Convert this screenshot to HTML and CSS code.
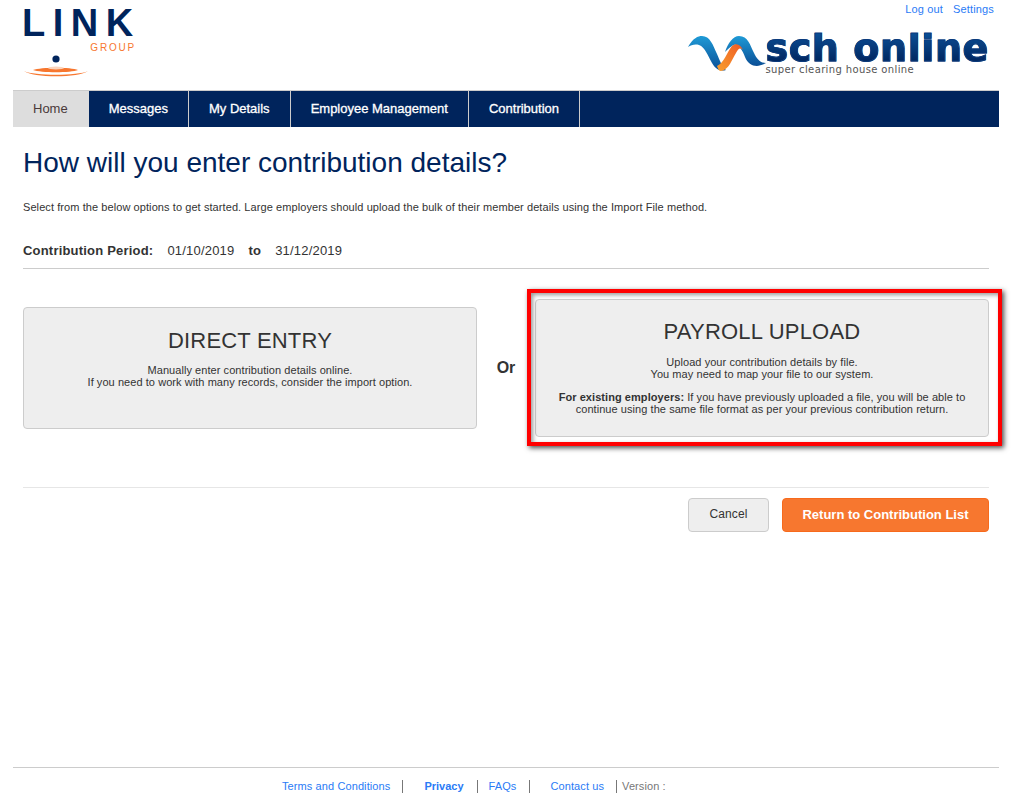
FILE: index.html
```html
<!DOCTYPE html>
<html>
<head>
    <title>How will you enter contribution details?</title>
    <meta charset="utf-8" />
    <link rel="stylesheet" href="styles.css">
</head>
<body>
    <div class="page">
        <header class="header">
            <div class="link-logo">
                <div class="link-word">LINK</div>
                <div class="link-group">GROUP</div>
                <svg class="link-mark" width="70" height="26" viewBox="0 0 70 26">
                    <circle cx="33" cy="5" r="3.6" fill="#00245c"/>
                    <path d="M10 16 C18 13 48 13 55 16 C48 19 18 19 10 16 Z" fill="#f7772f"/>
                    <ellipse cx="33" cy="14" rx="8" ry="1.5" fill="#fbd5bd"/>
                    <path d="M1 17 C10 24 56 24 65 17 C55 22 11 22 1 17 Z" fill="#f7772f"/>
                </svg>
            </div>
            <div class="header-right">
                <div class="user-links">
                    <a href="#">Log out</a>
                    <a href="#">Settings</a>
                </div>
                <div class="sch-logo">
                    <svg class="sch-wave" width="78" height="38" viewBox="0 0 78 38">
                        <defs>
                            <linearGradient id="waveBlue" x1="0" y1="0" x2="0" y2="1">
                                <stop offset="0" stop-color="#1e9ad6"/>
                                <stop offset="1" stop-color="#0b4f96"/>
                            </linearGradient>
                            <linearGradient id="waveOrange" x1="0" y1="1" x2="1" y2="0">
                                <stop offset="0" stop-color="#f9a02f"/>
                                <stop offset="1" stop-color="#ee5a24"/>
                            </linearGradient>
                        </defs>
                        <path d="M0 12 C5 3 10 1 14 1 C22 1 25 10 29 19 C32 26 34 32 38 35 C31 37 27 33 24 28 C20 21 17 12 11 10 C7 9 3 10 0 12 Z" fill="url(#waveBlue)"/>
                        <path d="M37 17 C40 8 45 1 51 1 C60 1 62 10 66 18 C69 24 72 28 78 28 C70 33 61 32 57 22 C54 14 49 7 44 11 C41 13 39 15 37 17 Z" fill="url(#waveBlue)"/>
                        <path d="M33 36 C41 35 44 24 48 18 C50 14 52 12 55 15 C53 11 49 7 44 11 C39 17 36 28 29 31 C30 34 31 36 33 36 Z" fill="url(#waveOrange)"/>
                    </svg>
                    <div class="sch-text">
                        <div class="sch-word">sch online</div>
                        <div class="sch-tag">super clearing house online</div>
                    </div>
                </div>
            </div>
        </header>

        <nav class="nav">
            <a class="nav-item active" href="#">Home</a>
            <a class="nav-item" href="#">Messages</a>
            <a class="nav-item" href="#">My Details</a>
            <a class="nav-item" href="#">Employee Management</a>
            <a class="nav-item" href="#">Contribution</a>
        </nav>

        <main class="content">
            <h1>How will you enter contribution details?</h1>
            <p class="intro">Select from the below options to get started. Large employers should upload the bulk of their member details using the Import File method.</p>
            <div class="period">
                <b>Contribution Period:</b>
                <span>01/10/2019</span>
                <b>to</b>
                <span>31/12/2019</span>
            </div>

            <div class="options">
                <div class="card">
                    <h2>DIRECT ENTRY</h2>
                    <p>Manually enter contribution details online.<br>If you need to work with many records, consider the import option.</p>
                </div>
                <div class="or">Or</div>
                <div class="card card-tall">
                    <h2>PAYROLL UPLOAD</h2>
                    <p>Upload your contribution details by file.<br>You may need to map your file to our system.</p>
                    <p><b>For existing employers:</b> If you have previously uploaded a file, you will be able to continue using the same file format as per your previous contribution return.</p>
                    <div class="highlight"></div>
                </div>
            </div>

            <div class="actions">
                <button class="btn">Cancel</button>
                <button class="btn btn-primary">Return to Contribution List</button>
            </div>
        </main>

        <footer class="footer">
            <a href="#">Terms and Conditions</a>
            <a class="privacy" href="#">Privacy</a>
            <a class="faqs" href="#">FAQs</a>
            <a class="contact" href="#">Contact us</a>
            <span class="version">Version :</span>
        </footer>
    </div>
</body>
</html>
```

FILE: styles.css
```css
* {
    box-sizing: border-box;
}

body {
    margin: 0;
    font-family: "Liberation Sans", Arial, sans-serif;
    color: #333;
    background-color: #fff;
}

a {
    text-decoration: none;
}

.page {
    min-height: 100vh;
    margin: 0 20px 0 13px;
    display: flex;
    flex-direction: column;
}

/* header */
.header {
    height: 90px;
    display: flex;
    justify-content: space-between;
}

.link-logo {
    width: 113px;
    margin-left: 9px;
    padding-top: 5px;
}

.link-word {
    font-size: 38px;
    line-height: 37px;
    font-weight: bold;
    letter-spacing: 7.5px;
    white-space: nowrap;
    color: #00245c;
}

.link-group {
    font-size: 10px;
    line-height: 10px;
    margin: 1px -1px 0 0;
    letter-spacing: 1.8px;
    color: #f7772f;
    text-align: right;
}

.link-mark {
    display: block;
    margin: 1px 0 0 1px;
}

.header-right {
    display: flex;
    flex-direction: column;
    align-items: flex-end;
}

.user-links {
    padding: 3px 5px 0 0;
    font-size: 11px;
    line-height: 13px;
    letter-spacing: 0.15px;
    display: flex;
    gap: 10px;
}

.user-links a,
.footer a {
    color: #2a7bf6;
}

.sch-logo {
    display: flex;
    margin-top: 19px;
    padding-right: 10px;
}

.sch-wave {
    flex: none;
}

.sch-word {
    font-family: "DejaVu Sans", sans-serif;
    font-weight: bold;
    font-size: 38px;
    line-height: 30px;
    letter-spacing: 0.6px;
    white-space: nowrap;
    margin-top: -2px;
    margin-bottom: 2px;
    background: linear-gradient(#0b4f96, #00245c);
    -webkit-background-clip: text;
    background-clip: text;
    color: transparent;
    -webkit-text-stroke: 0.9px #0a3a7c;
}

.sch-tag {
    font-family: "DejaVu Sans", sans-serif;
    font-size: 10px;
    line-height: 10px;
    letter-spacing: 0.37px;
    color: #555;
    white-space: nowrap;
}

/* nav */
.nav {
    display: flex;
    height: 37px;
    background-color: #00245c;
    border-top: 1px solid #ccc;
}

.nav-item {
    padding: 0 20px;
    line-height: 36px;
    font-size: 13px;
    color: #fff;
    -webkit-text-stroke: 0.3px #fff;
    border-right: 1px solid #ccc;
}

.nav-item.active {
    background-color: #ddd;
    color: #4a3a3a;
    -webkit-text-stroke: 0;
    padding-right: 21px;
    border-right: 0;
}

/* content */
.content {
    padding: 0 10px;
}

h1 {
    margin: 19px 0 0;
    font-size: 28px;
    line-height: 34px;
    font-weight: normal;
    color: #00245c;
}

.intro {
    margin: 20px 0 0;
    font-size: 11px;
    line-height: 14px;
    letter-spacing: 0.08px;
}

.period {
    margin-top: 28px;
    padding-bottom: 9px;
    border-bottom: 1px solid #ccc;
    font-size: 13px;
    line-height: 17px;
    letter-spacing: 0.2px;
    display: flex;
    gap: 14px;
}

.options {
    display: grid;
    grid-template-columns: 454px 58px 454px;
    align-items: center;
    margin-top: 30px;
}

.card {
    position: relative;
    height: 122px;
    padding: 18px 20px 0;
    background-color: #eee;
    border: 1px solid #ccc;
    border-radius: 4px;
    text-align: center;
    font-size: 11px;
    line-height: 12px;
    letter-spacing: 0.06px;
}

.card-tall {
    height: 138px;
}

.card h2 {
    margin: 0 0 10px;
    font-size: 22px;
    line-height: 28px;
    font-weight: normal;
    letter-spacing: 0.2px;
}

.card p {
    margin: 0 0 11px;
}

.card:not(.card-tall) h2 {
    margin: 1px 0 9px;
}

.highlight {
    position: absolute;
    top: -11px;
    left: -9px;
    right: -14px;
    bottom: -10px;
    border: 4px solid #f00;
    box-shadow: 2px 2px 5px rgba(0, 0, 0, 0.7), inset 2px 2px 4px rgba(0, 0, 0, 0.4);
}

.or {
    font-size: 16px;
    font-weight: bold;
    text-align: center;
}

.actions {
    margin-top: 50px;
    padding-top: 10px;
    border-top: 1px solid #e6e6e6;
    display: flex;
    justify-content: flex-end;
    gap: 13px;
}

.btn {
    width: 81px;
    height: 34px;
    padding: 0 0 2px;
    font-family: inherit;
    font-size: 12px;
    letter-spacing: 0.1px;
    color: #333;
    background-color: #eee;
    border: 1px solid #ccc;
    border-radius: 4px;
}

.btn-primary {
    width: 207px;
    font-size: 13px;
    letter-spacing: 0;
    font-weight: bold;
    color: #fff;
    background-color: #f7772f;
    border-color: #f76a1c;
}

/* footer */
.footer {
    margin-top: auto;
    height: 43px;
    border-top: 1px solid #ccc;
    padding: 12px 0 0 269px;
    font-size: 11px;
    line-height: 13px;
    letter-spacing: 0.1px;
    display: flex;
    align-items: flex-start;
}

.footer a {
    border-right: 1px solid #777;
    padding-right: 12px;
}

.footer .privacy {
    margin-left: 21px;
    padding-right: 13px;
    font-weight: bold;
    letter-spacing: 0;
}

.footer .faqs {
    margin-left: 11px;
    padding-right: 13px;
}

.footer .contact {
    margin-left: 20px;
}

.version {
    padding-left: 5px;
    color: #777;
}
```
